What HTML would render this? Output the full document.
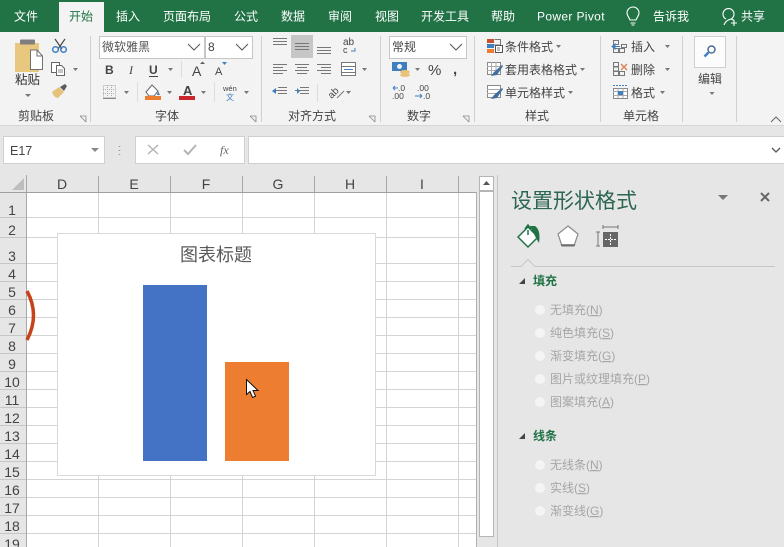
<!DOCTYPE html>
<html><head><meta charset="utf-8"><style>
html,body{margin:0;padding:0;width:784px;height:547px;overflow:hidden;background:#e6e6e6}
svg{display:block;font-family:"Liberation Sans","Noto Sans CJK SC",sans-serif}
.tab{fill:#fff;font-size:12px}
.r{fill:#444;font-size:12px}
.g{fill:#444;font-size:12px}
.h{fill:#444;font-size:14px;text-anchor:middle}
.o{fill:#a6a6a6;font-size:12px}
.s{font-size:12px;font-weight:bold;fill:#217346}
.sep{stroke:#d0d0d0;stroke-width:1}
.grid{stroke:#d4d4d4;stroke-width:1}
</style></head><body>
<svg width="784" height="547" viewBox="0 0 784 547" xmlns="http://www.w3.org/2000/svg">
<!-- title -->
<rect width="784" height="32" fill="#217346"/>
<rect x="59" y="2" width="45" height="30" fill="#f3f3f3"/>
<text x="14" y="20.500" class="tab">文件</text>
<text x="69" y="20.500" class="tab" style="fill:#217346">开始</text>
<text x="116" y="20.500" class="tab">插入</text>
<text x="163" y="20.500" class="tab">页面布局</text>
<text x="234" y="20.500" class="tab">公式</text>
<text x="281" y="20.500" class="tab">数据</text>
<text x="328" y="20.500" class="tab">审阅</text>
<text x="375" y="20.500" class="tab">视图</text>
<text x="421" y="20.500" class="tab">开发工具</text>
<text x="491" y="20.500" class="tab">帮助</text>
<text x="537" y="20.500" class="tab" style="letter-spacing:.35px">Power Pivot</text>
<path d="M630 20c-1-3-3-4-3-7a6 6 0 0 1 12 0c0 3-2 4-3 7zM630.500 23h5M631.500 25h3" fill="none" stroke="#fff" stroke-width="1.100"/>
<text x="653" y="20.500" class="tab">告诉我</text>
<path d="M726 19a5.500 5.500 0 1 1 5 0c-4 1-6 3-7 6M734 20v6M731 23h6M731 19c1 .3 2 .8 3 1.500" fill="none" stroke="#fff" stroke-width="1.100"/>
<text x="741" y="20.500" class="tab">共享</text>

<!-- ribbon -->
<rect y="32" width="784" height="93" fill="#f3f3f3"/>
<rect y="125" width="784" height="1" fill="#d6d6d6"/>
<g class="sep">
<path d="M90.500 36v86M261.500 36v86M380.500 36v86M474.500 36v86M600.500 36v86M682.500 36v86M736.500 36v86"/>
<path d="M181.500 61v16M137.500 82v20M214.500 82v20M317.500 84v18" stroke="#dcdcdc"/>
</g>
<!-- clipboard -->
<path d="M15 43h8l2-3h4l2 3h8v29H15z" fill="#e8c77e"/>
<rect x="20" y="39.500" width="15" height="5" rx="1" fill="#7f7f7f"/>
<path d="M30.500 50h6.500l5.500 6v13.500h-12z" fill="#fff" stroke="#6f6f6f"/>
<path d="M37 50v6h5.500" fill="none" stroke="#6f6f6f"/>
<text x="15" y="84" class="r" style="font-size:12.500px;fill:#333">粘贴</text>
<path d="M25 94h6l-3 3z" fill="#777"/>
<g fill="none" stroke="#4a4a4a" stroke-width="1.200"><path d="M55 39l7 10M65 39l-7 10"/></g>
<g fill="none" stroke="#3f7fbf" stroke-width="1.500"><circle cx="55.500" cy="49.500" r="2.800"/><circle cx="63.500" cy="49.500" r="2.800"/></g>
<g fill="#fff" stroke="#666"><rect x="51.500" y="62.500" width="8" height="10"/><path d="M56.500 65.500h5l3 3v7h-8z"/></g>
<path d="M58 70h5M58 72h5" stroke="#888"/>
<path d="M73 68h5l-2.500 3z" fill="#777"/>
<path d="M52 92l7-5 5 5-6 6c-3 0-5-3-6-6z" fill="#e6c27a"/>
<path d="M60 87l5-3 2 2-3 5z" fill="#5c5c5c"/>
<text x="18" y="120" class="g">剪贴板</text>
<path d="M80 116h6v6M80 116l6 6" fill="none" stroke="#888" stroke-width=".8"/>
<!-- font -->
<rect x="99.500" y="36.500" width="105" height="22" fill="#fff" stroke="#c6c6c6"/>
<rect x="205.500" y="36.500" width="47" height="22" fill="#fff" stroke="#c6c6c6"/>
<text x="102" y="51" class="r" style="fill:#555">微软雅黑</text>
<path d="M188 44l6 6 6-6M236 44l6 6 6-6" fill="none" stroke="#555"/>
<text x="208" y="51" class="r">8</text>
<text x="105" y="74" style="font-size:12px;font-weight:bold;fill:#444">B</text>
<text x="129" y="74" style="font-size:12px;font-style:italic;font-family:'Liberation Serif';fill:#444">I</text>
<text x="149" y="74" style="font-size:12px;font-weight:bold;fill:#444">U</text>
<path d="M149 76.500h9" stroke="#444"/>
<path d="M168 68h5l-2.500 3z" fill="#777"/>
<text x="192" y="76" style="font-size:14px;fill:#444">A</text>
<path d="M200 64h5l-2.500-2.500z" fill="#5f5f5f"/>
<text x="215" y="75" style="font-size:11px;fill:#444">A</text>
<path d="M222 62h5l-2.500 3z" fill="#3f7fbf"/>
<path d="M103.500 85.500h12v12h-12zM107.500 85v12M111.500 85v12M103 89.500h12M103 93.500h12" fill="none" stroke="#aaa" stroke-dasharray="1 1"/>
<path d="M103 98.500h13" stroke="#888"/>
<path d="M124 91h5l-2.500 3z" fill="#777"/>
<path d="M146 92l6-7 6 6-4 5h-5z" fill="#fff" stroke="#666"/>
<path d="M158 91l2 4-3 0z" fill="#3f7fbf"/>
<rect x="145" y="96" width="16" height="4" fill="#ed7d31"/>
<path d="M167 91h5l-2.500 3z" fill="#777"/>
<text x="183" y="95" style="font-size:13px;fill:#444;font-weight:bold">A</text>
<rect x="179" y="96" width="16" height="4" fill="#c8262c"/>
<path d="M201 91h5l-2.500 3z" fill="#777"/>
<text x="223" y="91" style="font-size:7.500px;fill:#444">wén</text>
<text x="226" y="100" style="font-size:8px;fill:#3f7fbf">文</text>
<path d="M244 91h5l-2.500 3z" fill="#777"/>
<text x="155" y="120" class="g">字体</text>
<path d="M250 116h6v6M250 116l6 6" fill="none" stroke="#888" stroke-width=".8"/>
<!-- alignment -->
<rect x="291" y="35" width="22" height="23" fill="#c6c6c6"/>
<path d="M273 38.500h14M273 41.500h14M273 44.500h14M295 43.500h14M295 46.500h14M295 49.500h14M317 47.500h14M317 50.500h14M317 53.500h14" stroke="#777" fill="none"/>
<text x="343" y="45" style="font-size:10px;fill:#444">ab</text>
<text x="343" y="53" style="font-size:9px;fill:#444">c</text>
<path d="M355 48v3h-4" fill="none" stroke="#3f7fbf"/>
<path d="M273 64.500h14M273 67.500h10M273 70.500h14M273 73.500h10M295 64.500h14M297 67.500h10M295 70.500h14M297 73.500h10M317 64.500h14M321 67.500h10M317 70.500h14M321 73.500h10" stroke="#777" fill="none"/>
<rect x="341.500" y="62.500" width="14" height="13" fill="#fff" stroke="#777"/>
<path d="M341 66.500h14M341 72.500h14" stroke="#777"/>
<path d="M344 69.500h9" stroke="#3f7fbf"/>
<path d="M362 68h5l-2.500 3z" fill="#777"/>
<path d="M278 87.500h9M278 90.500h9M278 93.500h9M273 90.500h5M300 87.500h9M300 90.500h9M300 93.500h9M295 90.500h5" stroke="#777"/>
<path d="M272 91l4-3v6zM300 91l-3-3v6z" fill="#3f7fbf"/>
<text x="327" y="96" transform="rotate(-45 333 92)" style="font-size:10px;fill:#444">ab</text>
<path d="M337 98l7-7" stroke="#777"/>
<path d="M346 91h5l-2.500 3z" fill="#777"/>
<text x="288" y="120" class="g">对齐方式</text>
<path d="M369 116h6v6M369 116l6 6" fill="none" stroke="#888" stroke-width=".8"/>
<!-- number -->
<rect x="389.500" y="36.500" width="77" height="22" fill="#fff" stroke="#c6c6c6"/>
<text x="392" y="51" class="r">常规</text>
<path d="M450 44l6 6 6-6" fill="none" stroke="#555"/>
<rect x="392" y="62" width="15" height="9" fill="#3f7fbf"/>
<circle cx="399.500" cy="66.500" r="2.500" fill="#f3f3f3"/>
<ellipse cx="405" cy="72" rx="5" ry="2" fill="#e6c27a"/>
<ellipse cx="405" cy="75" rx="5" ry="2" fill="#e6c27a"/>
<path d="M415 68h5l-2.500 3z" fill="#777"/>
<text x="428" y="75" style="font-size:15px;fill:#444">%</text>
<text x="453" y="74" style="font-size:15px;font-weight:bold;fill:#444">,</text>
<text x="398" y="91" style="font-size:8.500px;fill:#444">.0</text>
<text x="392" y="99" style="font-size:8.500px;fill:#444">.00</text>
<path d="M393 88h5M393 88l2-2M393 88l2 2" stroke="#3f7fbf" fill="none"/>
<text x="417" y="91" style="font-size:8.500px;fill:#444">.00</text>
<text x="423" y="99" style="font-size:8.500px;fill:#444">.0</text>
<path d="M415 96h7M422 96l-2-2M422 96l-2 2" stroke="#3f7fbf" fill="none"/>
<text x="407" y="120" class="g">数字</text>
<path d="M463 116h6v6M463 116l6 6" fill="none" stroke="#888" stroke-width=".8"/>
<!-- styles -->
<rect x="487" y="39" width="7" height="4" fill="#c8502c"/><rect x="487" y="44" width="7" height="4" fill="#3f7fbf"/><rect x="487" y="49" width="7" height="4" fill="#ed7d31"/>
<path d="M494.500 39.500h6v6M494 45h6" fill="none" stroke="#777"/>
<rect x="495.500" y="45.500" width="7" height="7" fill="#fff" stroke="#555"/>
<path d="M497 48h3M497 50h3" stroke="#555" stroke-width=".8"/>
<text x="505" y="51" class="r">条件格式</text><path d="M556 45h5l-2.500 3z" fill="#777"/>
<rect x="487.500" y="62.500" width="13" height="12" fill="#fff" stroke="#888"/><path d="M487 66.500h13M487 70.500h13M491.500 62v12M496 62v12" stroke="#aaa"/><path d="M491 76l3-4 8-7 1 1-6 9z" fill="#3f6f9f"/>
<text x="505" y="74" class="r">套用表格格式</text><path d="M580 68h5l-2.500 3z" fill="#777"/>
<rect x="487.500" y="85.500" width="13" height="12" fill="#fff" stroke="#888"/><path d="M487 89.500h13M487 93.500h13" stroke="#aaa"/><path d="M491 99l3-4 8-7 1 1-6 9z" fill="#3f6f9f"/>
<text x="505" y="97" class="r">单元格样式</text><path d="M568 91h5l-2.500 3z" fill="#777"/>
<text x="525" y="120" class="g">样式</text>
<!-- cells -->
<g fill="none" stroke="#777"><rect x="613.500" y="40.500" width="5" height="4"/><rect x="613.500" y="48.500" width="5" height="4"/><rect x="619.500" y="48.500" width="5" height="4"/><rect x="621.500" y="44.500" width="5" height="3"/></g>
<path d="M612 46.500h8M612 46.500l3-2.500v5z" stroke="#3f7fbf" fill="#3f7fbf"/>
<text x="631" y="51" class="r">插入</text><path d="M665 45h5l-2.500 3z" fill="#777"/>
<g fill="none" stroke="#777"><rect x="613.500" y="62.500" width="5" height="4"/><rect x="613.500" y="71.500" width="5" height="4"/><rect x="619.500" y="71.500" width="5" height="4"/><rect x="613.500" y="67" width="5" height="4"/></g>
<path d="M621 64l6 6M627 64l-6 6" stroke="#e07b4a" stroke-width="1.300"/>
<text x="631" y="74" class="r">删除</text><path d="M665 68h5l-2.500 3z" fill="#777"/>
<rect x="613.500" y="88.500" width="14" height="10" fill="#fff" stroke="#888"/><path d="M613 91.500h14M613 95.500h14M618 88v10M623 88v10" stroke="#aaa"/><rect x="618" y="91" width="5" height="4" fill="#3f7fbf"/><path d="M613 85.500h14" stroke="#3f7fbf" stroke-dasharray="2 1"/>
<text x="631" y="97" class="r">格式</text><path d="M660 91h5l-2.500 3z" fill="#777"/>
<text x="623" y="120" class="g">单元格</text>
<!-- edit -->
<rect x="694.500" y="36.500" width="31" height="31" fill="#fcfcfc" stroke="#cfcfcf"/>
<circle cx="711.500" cy="49.500" r="3.500" fill="none" stroke="#4a6f99" stroke-width="1.500"/>
<path d="M708.500 52.500l-4 4" stroke="#3f7fbf" stroke-width="2.500"/>
<text x="698" y="83" class="r">编辑</text>
<path d="M709.500 92h5l-2.500 3z" fill="#777"/>
<path d="M771 122l5-5 5 5" fill="none" stroke="#666"/>

<!-- formula bar -->
<rect y="126" width="784" height="49" fill="#e6e6e6"/>
<rect x="3.500" y="136.500" width="101" height="27" fill="#fff" stroke="#d0d0d0"/>
<text x="10" y="155" style="font-size:12.500px;fill:#444">E17</text>
<path d="M91 148h8l-4 4z" fill="#888"/>
<path d="M119.500 146v1M119.500 150v1M119.500 154v1" stroke="#999" stroke-width="1.500"/>
<rect x="135.500" y="136.500" width="109" height="27" fill="#fff" stroke="#d0d0d0"/>
<path d="M148 145l10 9M158 145l-10 9" stroke="#b5b5b5" stroke-width="1.500"/>
<path d="M184 150l4 4 8-9" fill="none" stroke="#b5b5b5" stroke-width="2"/>
<text x="220" y="154" style="font-size:12px;font-style:italic;font-family:'Liberation Serif';fill:#666">fx</text>
<rect x="248.500" y="136.500" width="540" height="27" fill="#fff" stroke="#d0d0d0"/>
<path d="M772 148l4 4 4-4" fill="none" stroke="#555" stroke-width="1.300"/>

<!-- sheet -->
<rect x="26" y="192" width="450" height="355" fill="#fff"/>
<rect y="175" width="476" height="17" fill="#e6e6e6"/>
<rect y="192" width="26" height="355" fill="#e6e6e6"/>
<path d="M12 190h12v-12z" fill="#bdbdbd"/>
<g class="grid">
<path d="M26 217.500h450M26 237.500h450M26 263.500h450M26 281.500h450M26 299.500h450M26 317.500h450M26 335.500h450M26 353.500h450M26 371.500h450M26 389.500h450M26 407.500h450M26 425.500h450M26 443.500h450M26 461.500h450M26 479.500h450M26 497.500h450M26 515.500h450M26 533.500h450"/>
<path d="M98.500 192v355M170.500 192v355M242.500 192v355M314.500 192v355M386.500 192v355M458.500 192v355"/>
</g>
<path d="M0 217.500h26M0 237.500h26M0 263.500h26M0 281.500h26M0 299.500h26M0 317.500h26M0 335.500h26M0 353.500h26M0 371.500h26M0 389.500h26M0 407.500h26M0 425.500h26M0 443.500h26M0 461.500h26M0 479.500h26M0 497.500h26M0 515.500h26M0 533.500h26" stroke="#c6c6c6"/>
<path d="M26.500 175v372M98.500 176v16M170.500 176v16M242.500 176v16M314.500 176v16M386.500 176v16M458.500 176v16" stroke="#a8a8a8"/>
<path d="M0 192.500h476" stroke="#9f9f9f"/>
<path d="M476.500 192v355" stroke="#b0b0b0"/>
<g class="h" style="font-size:14px">
<text x="62" y="189">D</text><text x="134" y="189">E</text><text x="206" y="189">F</text><text x="278" y="189">G</text><text x="350" y="189">H</text><text x="422" y="189">I</text>
<text x="12" y="215">1</text><text x="12" y="235">2</text><text x="12" y="261">3</text><text x="12" y="279">4</text><text x="12" y="297">5</text><text x="12" y="315">6</text><text x="12" y="333">7</text><text x="12" y="351">8</text><text x="12" y="369">9</text><text x="12" y="387">10</text><text x="12" y="405">11</text><text x="12" y="423">12</text><text x="12" y="441">13</text><text x="12" y="459">14</text><text x="12" y="477">15</text><text x="12" y="495">16</text><text x="12" y="513">17</text><text x="12" y="531">18</text><text x="12" y="549">19</text>
</g>
<path d="M27 291Q40 315 27 340" fill="none" stroke="#c5421b" stroke-width="3.500"/>

<!-- chart -->
<rect x="57.500" y="233.500" width="318" height="242" fill="#fff" stroke="#d9d9d9"/>
<text x="180" y="261" style="font-size:18px;fill:#595959">图表标题</text>
<rect x="143" y="285" width="64" height="176" fill="#4472c4"/>
<rect x="225" y="362" width="64" height="99" fill="#ed7d31"/>
<path d="M246.500 379.500v15l3.500-3 2.500 6 3-1.300-2.500-5.700h5z" fill="#fff" stroke="#111"/>

<!-- scrollbar -->
<rect x="477" y="175" width="20" height="372" fill="#e6e6e6"/>
<rect x="479.500" y="176.500" width="14" height="14" fill="#fff" stroke="#b5b5b5"/>
<path d="M483 185h7l-3.500-4z" fill="#555"/>
<rect x="479.500" y="191.500" width="14" height="345" fill="#fff" stroke="#b5b5b5"/>
<path d="M497.500 175v372" stroke="#c6c6c6"/>

<!-- pane -->
<rect x="498" y="175" width="286" height="372" fill="#e6e6e6"/>
<text x="511" y="208" style="font-size:21px;fill:#2c6650">设置形状格式</text>
<path d="M718 195h10l-5 5z" fill="#777"/>
<path d="M761 193l8 8M769 193l-8 8" stroke="#666" stroke-width="2"/>
<path d="M518 237l10-10 10 10-10 10z" fill="#fff" stroke="#217346" stroke-width="1.500"/>
<path d="M525 229l3-4 3 4M528 230v5" stroke="#217346" fill="none" stroke-width="1.500"/>
<path d="M530 226h5q6 4 4 17l-3-5z" fill="#217346"/>
<path d="M568 226l10 8-4 12h-12l-4-12z" fill="#fff" stroke="#8a8a8a" stroke-width="1.200"/>
<path d="M561 245h14" stroke="#666" stroke-width="1.500"/>
<rect x="603" y="232" width="15" height="15" fill="#666"/>
<path d="M610.500 234v11M605 239.500h11" stroke="#fff" stroke-dasharray="2 1"/>
<path d="M603 227h15M603 225v4M618 225v4M598 232v14M596 232h4M596 246h4" stroke="#777" fill="none"/>
<path d="M511 266.500h10l7-7 7 7h240" fill="none" stroke="#c6c6c6"/>
<path d="M519 284h6v-6z" fill="#444"/>
<text x="533" y="285" class="s">填充</text>
<g fill="#f4f4f4"><circle cx="540" cy="310" r="5"/><circle cx="540" cy="333" r="5"/><circle cx="540" cy="356" r="5"/><circle cx="540" cy="379" r="5"/><circle cx="540" cy="402" r="5"/><circle cx="540" cy="465" r="5"/><circle cx="540" cy="488" r="5"/><circle cx="540" cy="511" r="5"/></g>
<text x="550" y="314" class="o">无填充(<tspan text-decoration="underline">N</tspan>)</text>
<text x="550" y="337" class="o">纯色填充(<tspan text-decoration="underline">S</tspan>)</text>
<text x="550" y="360" class="o">渐变填充(<tspan text-decoration="underline">G</tspan>)</text>
<text x="550" y="383" class="o">图片或纹理填充(<tspan text-decoration="underline">P</tspan>)</text>
<text x="550" y="406" class="o">图案填充(<tspan text-decoration="underline">A</tspan>)</text>
<path d="M519 439h6v-6z" fill="#444"/>
<text x="533" y="440" class="s">线条</text>
<text x="550" y="469" class="o">无线条(<tspan text-decoration="underline">N</tspan>)</text>
<text x="550" y="492" class="o">实线(<tspan text-decoration="underline">S</tspan>)</text>
<text x="550" y="515" class="o">渐变线(<tspan text-decoration="underline">G</tspan>)</text>
</svg>
</body></html>
